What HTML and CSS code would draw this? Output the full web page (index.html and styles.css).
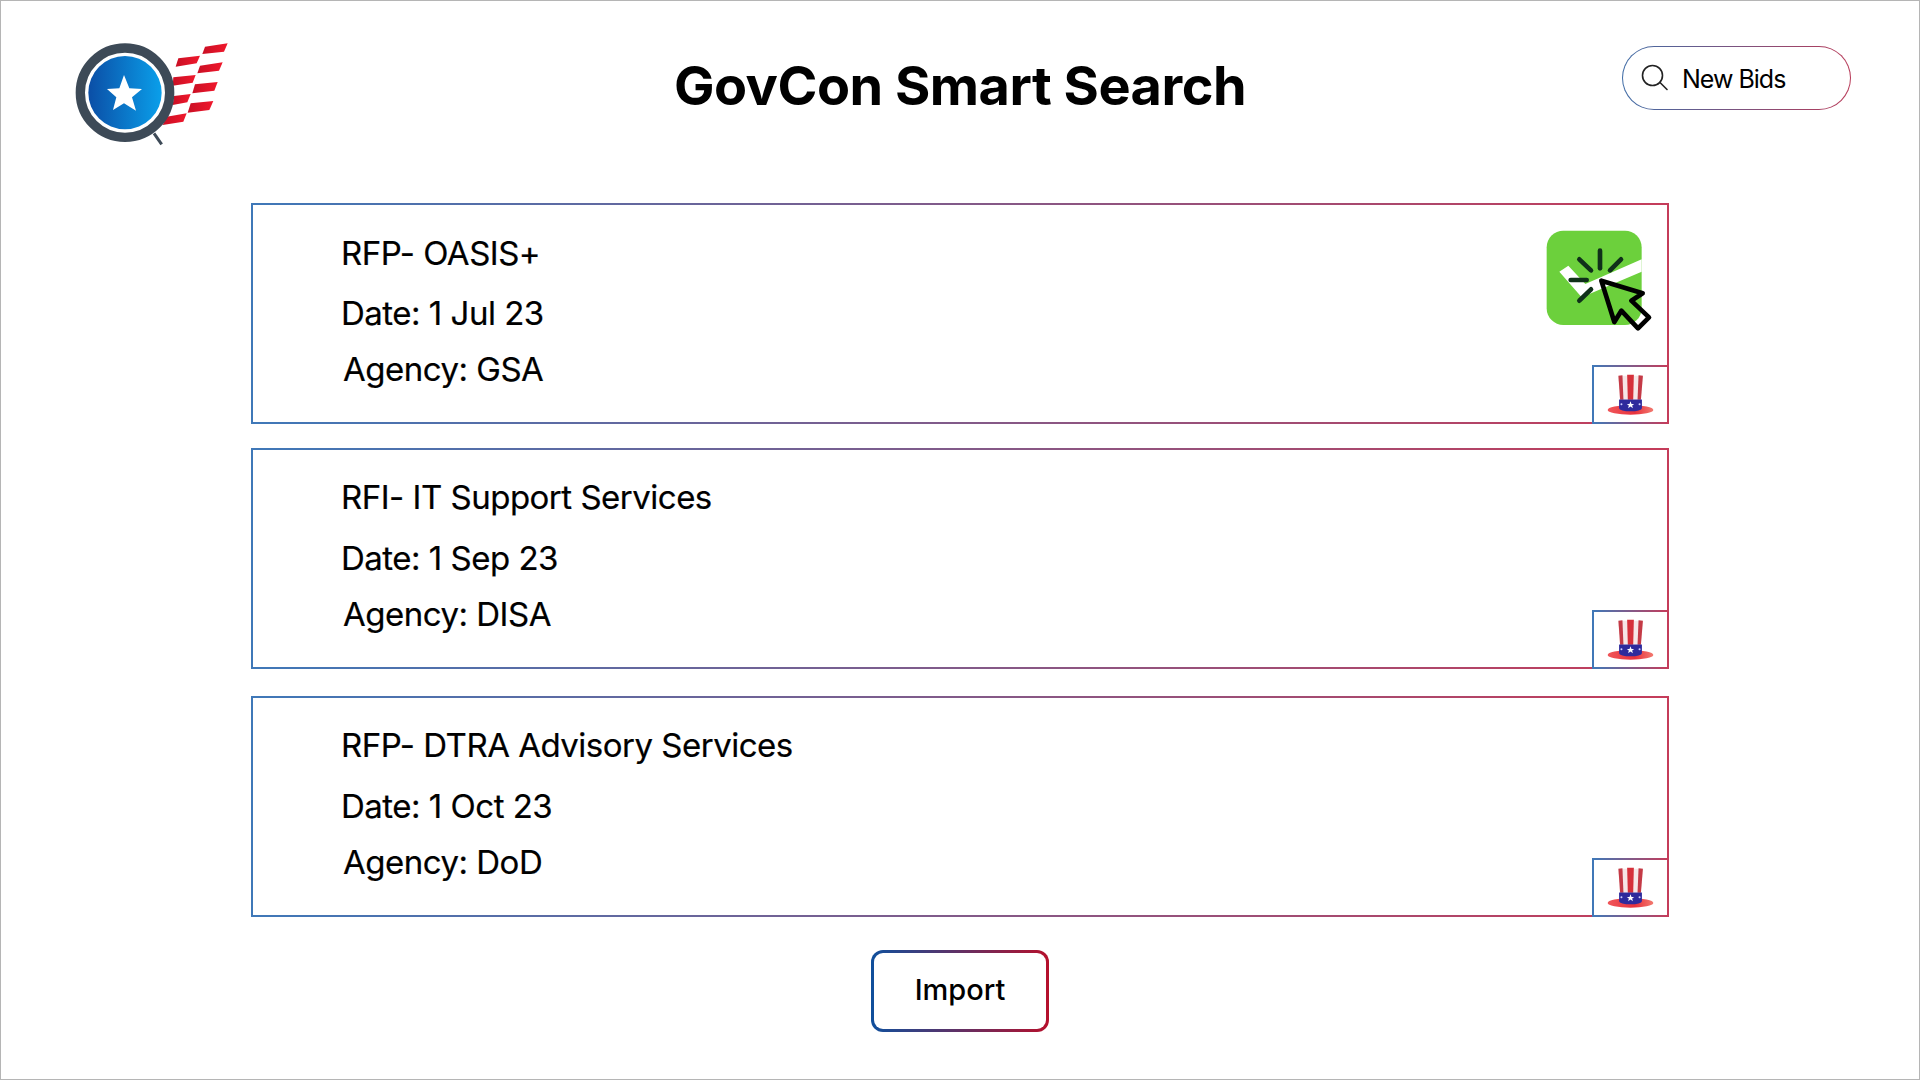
FILE: index.html
```html
<!DOCTYPE html>
<html lang="en">
<head>
  <meta charset="UTF-8" />
  <title>GovCon Smart Search</title>
  <link rel="stylesheet" href="styles.css">
</head>
<body>
  <svg class="defs" width="0" height="0" aria-hidden="true">
    <defs>
      <linearGradient id="lens" x1="0" y1="0" x2="1" y2="0">
        <stop offset="0" stop-color="#0b4ea6"/>
        <stop offset="1" stop-color="#0a9fea"/>
      </linearGradient>
      <linearGradient id="stripe" x1="0" y1="0" x2="1" y2="0">
        <stop offset="0" stop-color="#c90f24"/>
        <stop offset="1" stop-color="#f0182c"/>
      </linearGradient>
      <linearGradient id="brim" x1="0" y1="0" x2="1" y2="0">
        <stop offset="0" stop-color="#f0565a"/>
        <stop offset="0.6" stop-color="#e8323c"/>
        <stop offset="1" stop-color="#f27a70"/>
      </linearGradient>
      <symbol id="hat" viewBox="80 58 140 125">
        <polygon points="113,63 187,63 181,135 119,135" fill="#f6e6e6"/>
        <polygon points="114,63 126,62 129,135 119,135" fill="#c43a46"/>
        <polygon points="140,60 160,60 158,135 142,135" fill="#d6303a"/>
        <polygon points="174,62 187,63 181,135 171,135" fill="#c43a46"/>
        <ellipse cx="150" cy="165" rx="68" ry="14" fill="url(#brim)"/>
        <ellipse cx="150" cy="160" rx="34" ry="9" fill="#2e2a9c"/>
        <rect x="116" y="134" width="68" height="25" fill="#2e2a9c"/>
        <polygon points="150,139 153,147 161,147 155,152 157,160 150,155 143,160 145,152 139,147 147,147" fill="#fff"/>
        <circle cx="123" cy="148" r="3" fill="#cfd0ff"/>
        <circle cx="177" cy="148" r="3" fill="#cfd0ff"/>
      </symbol>
    </defs>
  </svg>

  <header class="top-bar">
    <svg class="logo" viewBox="0 0 660 420" aria-label="Logo">
      <g fill="url(#stripe)">
        <polygon points="465,80 533,70 522,95 457,102"/>
        <polygon points="385,115 450,107 440,130 377,140"/>
        <polygon points="450,137 518,127 507,152 442,160"/>
        <polygon points="370,172 437,165 428,188 368,197"/>
        <polygon points="435,193 503,186 493,212 427,220"/>
        <polygon points="372,228 422,222 412,247 368,255"/>
        <polygon points="422,250 490,243 478,270 413,278"/>
        <polygon points="350,290 410,280 400,305 338,315"/>
      </g>
      <line x1="312" y1="340" x2="335" y2="373" stroke="#3d4a57" stroke-width="9"/>
      <circle cx="225" cy="218" r="134" fill="#fff" stroke="#3d4a57" stroke-width="28"/>
      <circle cx="225" cy="218" r="110" fill="url(#lens)"/>
      <polygon points="222,165 238,205 276,207 246,232 258,272 222,250 189,270 199,232 171,207 208,205" fill="#fff"/>
    </svg>

    <h1 class="page-title">GovCon Smart Search</h1>

    <div class="search-box">
      <svg class="search-icon" viewBox="0 0 28 28" fill="none" stroke="#222" stroke-width="1.6" stroke-linecap="round">
        <circle cx="11.5" cy="11.5" r="10"/>
        <line x1="19" y1="18.5" x2="26" y2="25.5"/>
      </svg>
      <span class="search-text">New Bids</span>
    </div>
  </header>

  <main class="bid-list">
    <section class="bid-card">
      <p class="bid-title">RFP- OASIS+</p>
      <p class="bid-date">Date: 1 Jul 23</p>
      <p class="bid-agency">Agency: GSA</p>
      <svg class="click-icon" viewBox="120 45 345 330" fill="none">
        <rect x="140" y="62" width="285" height="283" rx="50" fill="#6cd03c"/>
        <polygon points="178,185 205,167 256,222 425,148 425,185 245,262" fill="#fff"/>
        <g stroke="#10301a" stroke-width="14" stroke-linecap="round">
          <line x1="300" y1="122" x2="300" y2="175"/>
          <line x1="238" y1="148" x2="273" y2="181"/>
          <line x1="363" y1="148" x2="330" y2="181"/>
          <line x1="212" y1="210" x2="260" y2="210"/>
          <line x1="273" y1="238" x2="238" y2="272"/>
        </g>
        <polygon points="304,212 428,250 394,272 447,322 414,355 364,302 343,336" stroke="#000" stroke-width="14" stroke-linejoin="round"/>
      </svg>
      <div class="hat-box"><svg class="hat"><use href="#hat"/></svg></div>
    </section>

    <section class="bid-card">
      <p class="bid-title">RFI- IT Support Services</p>
      <p class="bid-date">Date: 1 Sep 23</p>
      <p class="bid-agency">Agency: DISA</p>
      <div class="hat-box"><svg class="hat"><use href="#hat"/></svg></div>
    </section>

    <section class="bid-card last">
      <p class="bid-title">RFP- DTRA Advisory Services</p>
      <p class="bid-date">Date: 1 Oct 23</p>
      <p class="bid-agency">Agency: DoD</p>
      <div class="hat-box"><svg class="hat"><use href="#hat"/></svg></div>
    </section>
  </main>

  <div class="actions">
    <button class="import-btn">Import</button>
  </div>
</body>
</html>
```

FILE: styles.css
```css
/* Reset & Base */
* {
  box-sizing: border-box;
  margin: 0;
  padding: 0;
}

body {
  font-family: 'Inter', sans-serif;
  background-color: #fff;
  color: #000;
  width: 1920px;
  height: 1080px;
  overflow: hidden;
  border: 1px solid #b5b5b5;
}

.defs {
  display: block;
  height: 0;
}

/* Header */
.top-bar {
  display: grid;
  grid-template-columns: 1fr auto 1fr;
  height: 202px;
}

.logo {
  display: block;
  width: 220px;
  height: 140px;
  margin: 19px 0 0 49px;
}

.page-title {
  font-size: 54px;
  font-weight: 700;
  letter-spacing: -0.5px;
  line-height: 64px;
  margin-top: 53px;
}

.search-box {
  justify-self: end;
  display: flex;
  align-items: center;
  gap: 13px;
  width: 229px;
  height: 64px;
  margin: 45px 68px 0 0;
  padding-left: 18px;
  font-size: 25px;
  letter-spacing: -1px;
  border: 1.5px solid transparent;
  border-radius: 32px;
  background:
    linear-gradient(#fff, #fff) padding-box,
    linear-gradient(90deg, #3f6ca6, #b83a58) border-box;
}

.search-icon {
  width: 28px;
  height: 28px;
}

.search-text {
  padding-top: 2px;
}

/* Bid cards */
.bid-list {
  display: flex;
  flex-direction: column;
  gap: 24px;
  width: 1418px;
  margin-left: 250px;
}

.bid-card {
  position: relative;
  height: 221px;
  padding: 28px 0 0 88px;
  font-size: 33px;
  letter-spacing: -0.5px;
  -webkit-text-stroke: 0.2px #000;
  border: 2px solid;
  border-image: linear-gradient(90deg, #3f78b8, #c53c5a) 1;
}

.bid-card + .bid-card {
  padding-top: 27px;
}

.bid-card + .bid-card .bid-date {
  margin-top: 21px;
}

.bid-card.last {
  margin-top: 3px;
}

.bid-card p {
  line-height: 40px;
}

.bid-date {
  margin-top: 20px;
}

.bid-agency {
  margin: 16px 0 0 2px;
}

.click-icon {
  position: absolute;
  top: 20px;
  right: 12px;
  width: 115px;
  height: 110px;
}

.hat-box {
  position: absolute;
  right: -2px;
  bottom: -2px;
  display: flex;
  align-items: center;
  justify-content: center;
  width: 77px;
  height: 59px;
  background: #fff;
  border: 2px solid;
  border-image: linear-gradient(90deg, #3f78b8, #c53c5a) 1;
}

.hat {
  width: 47px;
  height: 42px;
}

/* Import */
.actions {
  display: flex;
  justify-content: center;
  margin-top: 33px;
}

.import-btn {
  width: 178px;
  height: 82px;
  padding-bottom: 3px;
  font-family: inherit;
  font-size: 29px;
  font-weight: 500;
  color: #000;
  border: 3px solid transparent;
  border-radius: 12px;
  background:
    linear-gradient(#fff, #fff) padding-box,
    linear-gradient(90deg, #0f4f9c, #b5102c) border-box;
  cursor: pointer;
}
```
